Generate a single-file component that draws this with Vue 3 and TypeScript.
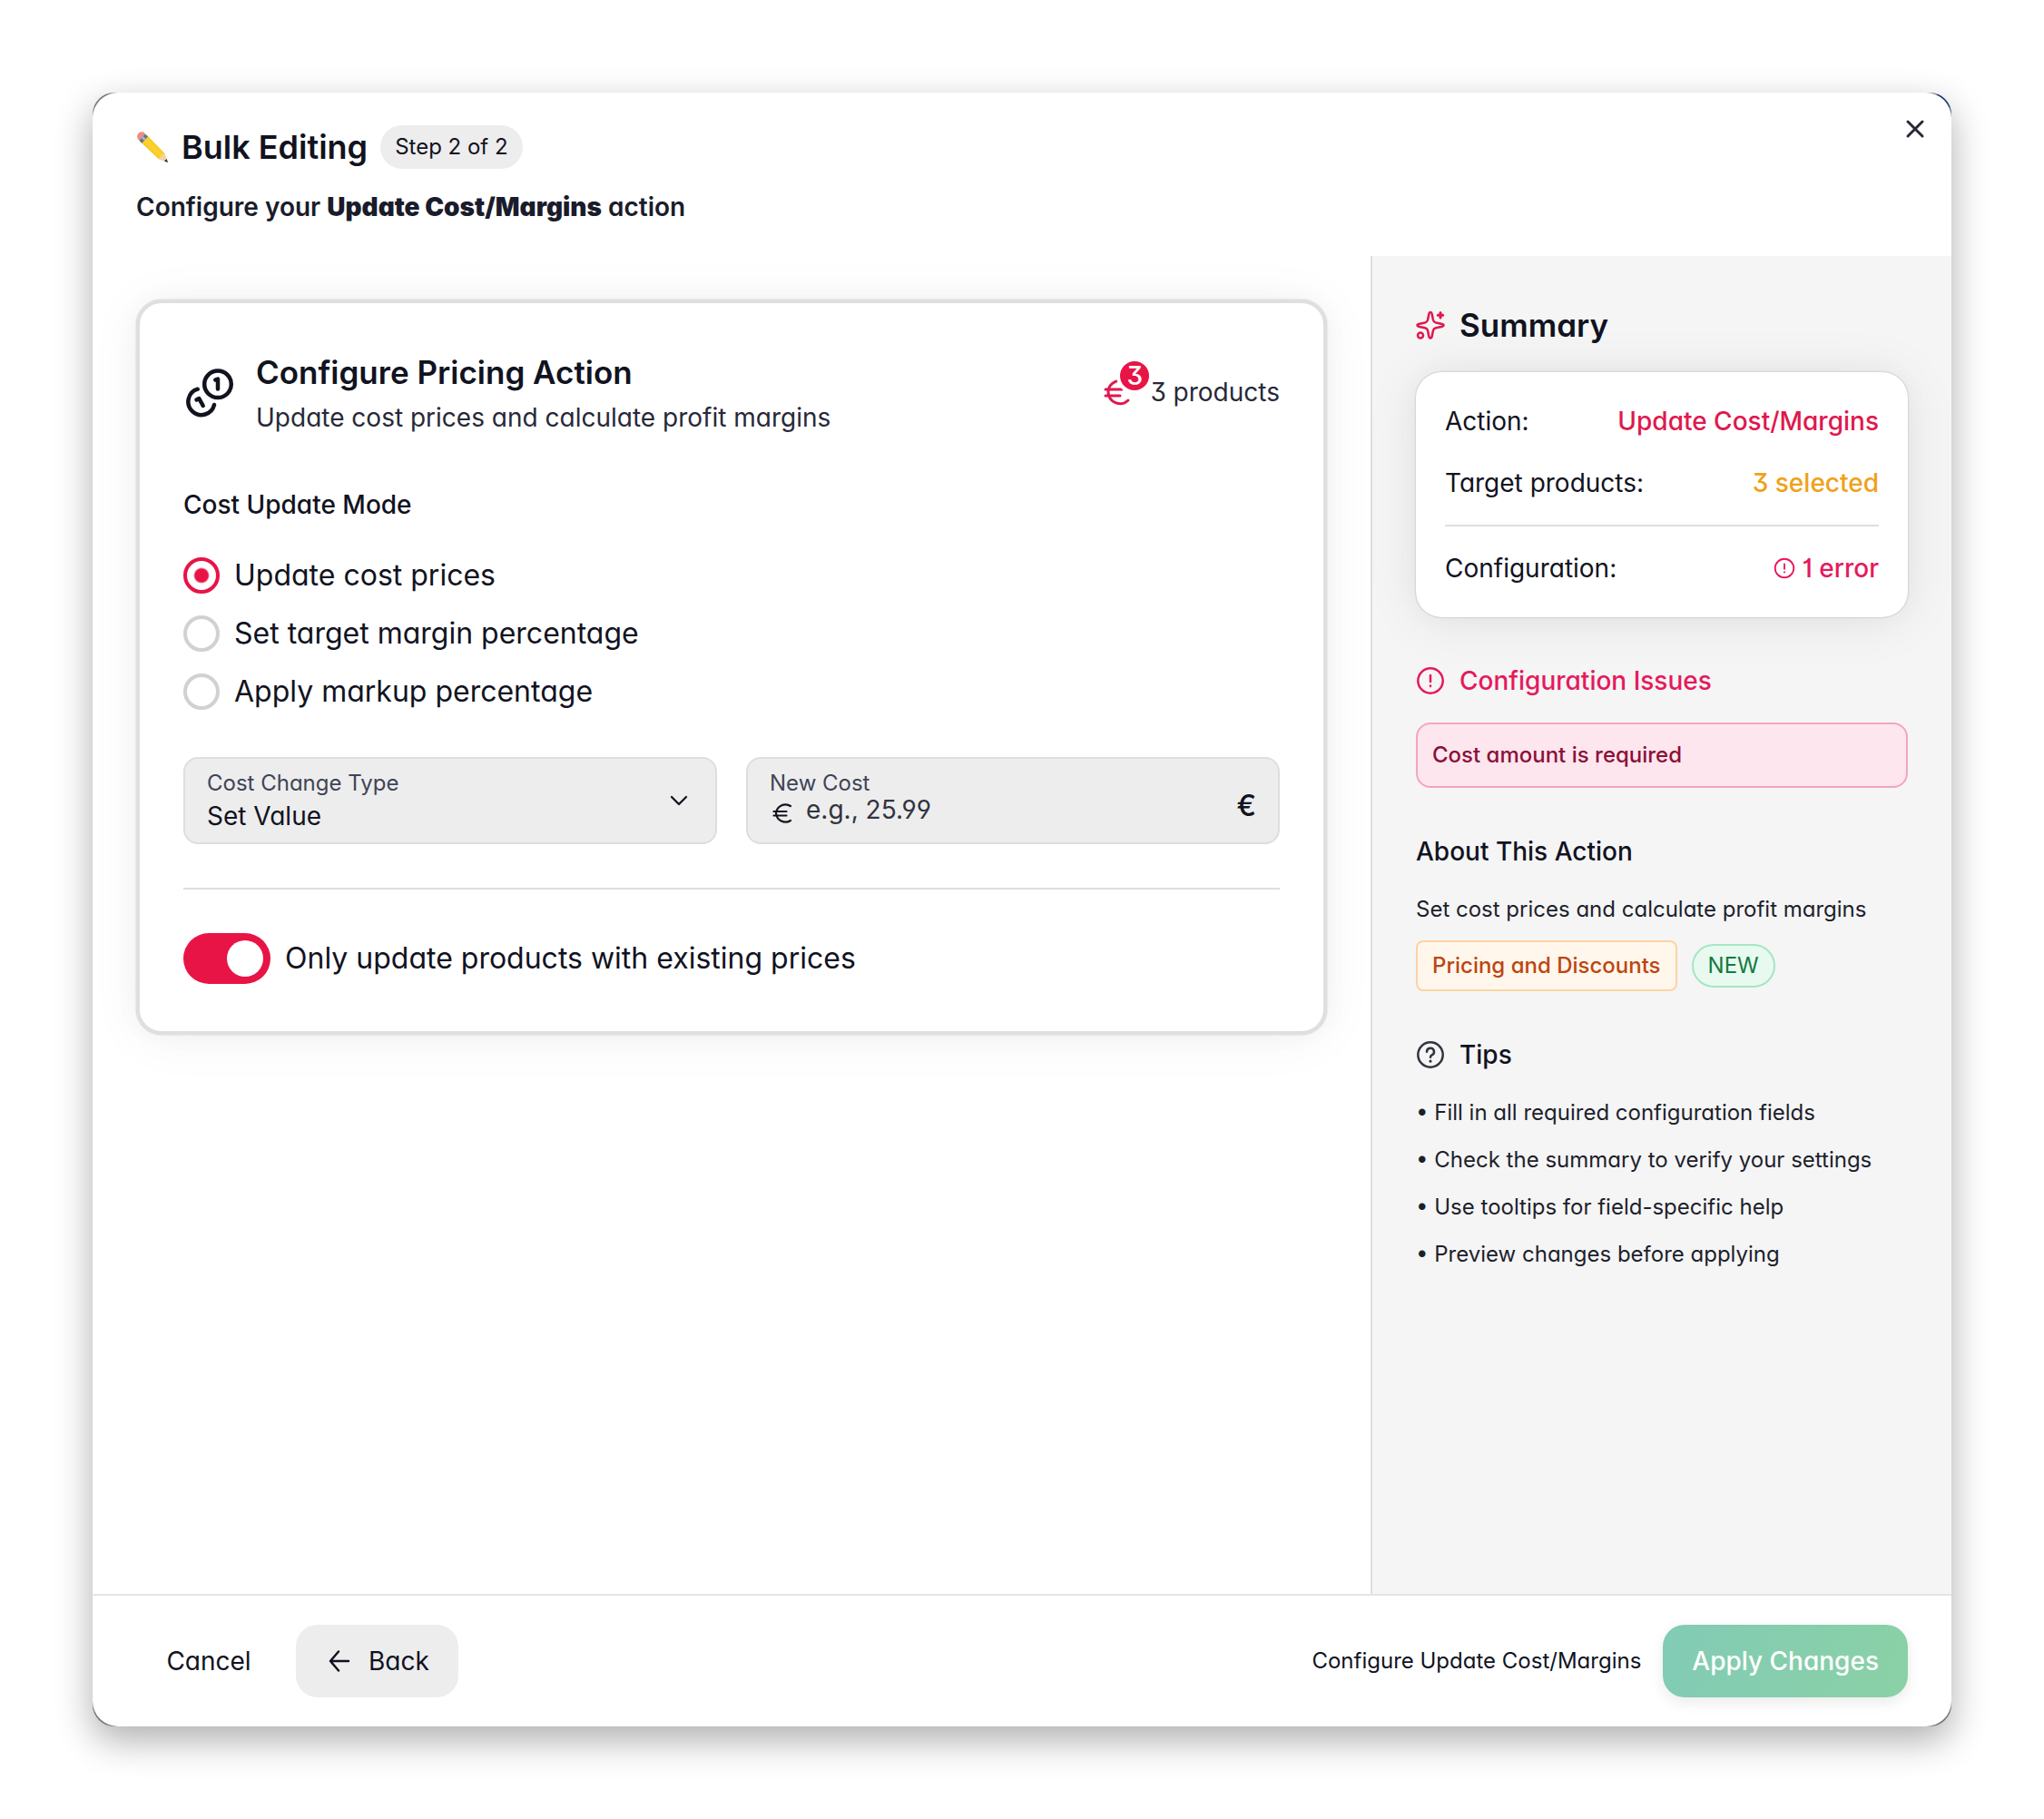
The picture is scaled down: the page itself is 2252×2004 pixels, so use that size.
<script setup lang="ts">
import { ref } from 'vue'

interface Option {
  value: string
  label: string
}

const modes: Option[] = [
  { value: 'cost', label: 'Update cost prices' },
  { value: 'margin', label: 'Set target margin percentage' },
  { value: 'markup', label: 'Apply markup percentage' },
]

const tips: string[] = [
  'Fill in all required configuration fields',
  'Check the summary to verify your settings',
  'Use tooltips for field-specific help',
  'Preview changes before applying',
]

const mode = ref('cost')
const changeType = ref('set')
const cost = ref('')
const onlyExisting = ref(true)
</script>

<template>
  <div class="page">
    <div class="window">
      <section class="modal" role="dialog" aria-labelledby="dialog-title">
        <header class="top">
          <div class="title-row">
            <svg class="pencil" viewBox="0 0 36 36" aria-hidden="true">
              <defs>
                <linearGradient id="wood" x1="0" y1="1" x2="1" y2="0">
                  <stop offset="0" stop-color="#e9a400" />
                  <stop offset="0.5" stop-color="#fdd32f" />
                  <stop offset="1" stop-color="#e8a800" />
                </linearGradient>
              </defs>
              <path d="M1.600 8.500 C0.500 6 1.500 3.500 3.200 2.200 C5 0.800 7.500 0.800 9 2.200 L10 3.400 L3.300 10.800 Z" fill="#ee8a86" />
              <path d="M5.300 12.800 L12.300 5.300 L31.500 25 L25 31.500 Z" fill="url(#wood)" />
              <path d="M3.300 10.800 L10 3.400 L13 6.400 L6.300 13.800 Z" fill="#66747f" />
              <path d="M5.800 8 L7.600 6 L10.800 9 L9 11 Z" fill="#a9b6bf" />
              <path d="M31.500 25 L35 35 L25 31.500 C25 29.500 26 29 27.500 29 C27.500 27 28.500 26.500 29.600 26.800 C29.600 25.500 30.200 25 31.500 25 Z" fill="#f3d3a2" />
              <path d="M33.600 31 L35 35 L31 33.600 Z" fill="#2c2c2c" />
            </svg>
            <h1 id="dialog-title">Bulk Editing</h1>
            <span class="step">Step 2 of 2</span>
          </div>
          <p class="lead">Configure your <strong>Update Cost/Margins</strong> action</p>
          <button class="close" type="button" aria-label="Close">
            <svg viewBox="0 0 32 32" fill="none" stroke="currentColor" stroke-width="3" stroke-linecap="round">
              <path d="M8 8 L24 24 M24 8 L8 24" />
            </svg>
          </button>
        </header>

        <div class="body">
          <main class="main">
            <form class="card" @submit.prevent>
              <div class="card-head">
                <svg class="coins" viewBox="0 0 56 56" fill="none" stroke="currentColor" stroke-width="4.500" stroke-linecap="round" stroke-linejoin="round" aria-hidden="true">
                  <circle cx="38" cy="19.300" r="14.800" />
                  <path d="M35.300 14.500 L38 13.500 V24.500" />
                  <path d="M15.700 24.700 A14.500 14.500 0 1 0 34 42" />
                  <path d="M14.500 36.500 L17.300 35 L21.700 43" />
                </svg>
                <div class="card-title">
                  <h2>Configure Pricing Action</h2>
                  <p>Update cost prices and calculate profit margins</p>
                </div>
                <div class="count">
                  <span class="euro-badge">
                    <svg viewBox="0 0 40 40" fill="none" stroke="currentColor" stroke-width="3" stroke-linecap="round" aria-hidden="true">
                      <path d="M32 29 A13 13 0 0 1 10 20 A13 13 0 0 1 32 11" />
                      <path d="M7 17 H25 M7 24 H23" />
                    </svg>
                    <span class="dot">3</span>
                  </span>
                  <span>3 products</span>
                </div>
              </div>

              <fieldset class="modes">
                <legend>Cost Update Mode</legend>
                <label v-for="m in modes" :key="m.value" class="mode">
                  <input v-model="mode" type="radio" name="mode" :value="m.value" />
                  <span>{{ m.label }}</span>
                </label>
              </fieldset>

              <div class="fields">
                <div class="field">
                  <div class="field-text">
                    <label for="change-type">Cost Change Type</label>
                    <select id="change-type" v-model="changeType">
                      <option value="set">Set Value</option>
                    </select>
                  </div>
                  <svg class="chevron" viewBox="0 0 32 32" fill="none" stroke="currentColor" stroke-width="2.300" stroke-linecap="round" stroke-linejoin="round" aria-hidden="true">
                    <path d="M8 12 L16 20 L24 12" />
                  </svg>
                </div>
                <div class="field">
                  <div class="field-text">
                    <label for="new-cost">New Cost</label>
                    <div class="amount">
                      <svg viewBox="0 2 28 32" fill="none" stroke="currentColor" stroke-width="2.200" stroke-linecap="round" aria-hidden="true">
                        <path d="M23 26 A10.500 10.500 0 0 1 7 18 A10.500 10.500 0 0 1 23 10" />
                        <path d="M4.500 16 H18.500 M4.500 20.500 H18.500" />
                      </svg>
                      <input id="new-cost" v-model="cost" type="text" placeholder="e.g., 25.99" />
                    </div>
                  </div>
                  <span class="unit">€</span>
                </div>
              </div>

              <hr />

              <label class="toggle">
                <input v-model="onlyExisting" type="checkbox" role="switch" />
                <span>Only update products with existing prices</span>
              </label>
            </form>
          </main>

          <aside class="side">
            <section>
              <h2 class="summary-title">
                <svg class="red" viewBox="0 0 32 32" fill="none" stroke="currentColor" stroke-width="2.500" stroke-linecap="round" stroke-linejoin="round" aria-hidden="true">
                  <path d="M16 2 C17.200 2 17.500 3 17.800 4.500 L19 10.500 C19.500 12.500 20 13 22 13.500 L28 14.700 C29.800 15 30.500 15.500 30.500 16.300 C30.500 17.200 29.800 17.600 28 18 L22 19.200 C20 19.700 19.500 20.200 19 22 L17.800 28 C17.500 29.700 17.200 30.500 16 30.500 C14.900 30.500 14.500 29.700 14.200 28 L13 22 C12.500 20.200 12 19.700 10 19.200 L4 18 C2.400 17.600 1.500 17.200 1.500 16.300 C1.500 15.500 2.400 15 4 14.700 L10 13.500 C12 13 12.500 12.500 13 10.500 L14.200 4.500 C14.500 3 14.900 2 16 2 Z" />
                  <path d="M27 2.500 V8 M24.300 5.200 H29.700" stroke-width="3" />
                  <circle cx="5" cy="27.500" r="3" />
                </svg>
                Summary
              </h2>
              <dl class="summary">
                <div class="row">
                  <dt>Action:</dt>
                  <dd class="red">Update Cost/Margins</dd>
                </div>
                <div class="row">
                  <dt>Target products:</dt>
                  <dd class="amber">3 selected</dd>
                </div>
                <div class="row ruled">
                  <dt>Configuration:</dt>
                  <dd class="pink">
                    <svg viewBox="0 0 32 32" fill="none" stroke="currentColor" stroke-width="2.500" stroke-linecap="round" aria-hidden="true">
                      <circle cx="16" cy="16" r="13.700" />
                      <path d="M16 10 V17 M16 21.500 V22" />
                    </svg>
                    1 error
                  </dd>
                </div>
              </dl>
            </section>

            <section>
              <h3 class="pink">
                <svg viewBox="0 0 32 32" fill="none" stroke="currentColor" stroke-width="2.500" stroke-linecap="round" aria-hidden="true">
                  <circle cx="16" cy="16" r="13.700" />
                  <path d="M16 10 V17 M16 21.500 V22" />
                </svg>
                Configuration Issues
              </h3>
              <p class="alert">Cost amount is required</p>
            </section>

            <section>
              <h3>About This Action</h3>
              <p class="about">Set cost prices and calculate profit margins</p>
              <div class="tags">
                <span class="tag">Pricing and Discounts</span>
                <span class="tag new">NEW</span>
              </div>
            </section>

            <section>
              <h3>
                <svg class="soft" viewBox="0 0 32 32" fill="none" stroke="currentColor" stroke-width="2.500" stroke-linecap="round" stroke-linejoin="round" aria-hidden="true">
                  <circle cx="16" cy="16" r="13.700" />
                  <path d="M12 12.800 A4 4 0 1 1 17.500 16.400 C16.500 17 16 17.600 16 18.800" />
                  <path d="M16 23 V23.200" stroke-width="3" />
                </svg>
                Tips
              </h3>
              <ul>
                <li v-for="tip in tips" :key="tip">• {{ tip }}</li>
              </ul>
            </section>
          </aside>
        </div>

        <footer class="bottom">
          <button class="btn" type="button">Cancel</button>
          <button class="btn back" type="button">
            <svg viewBox="0 0 32 32" fill="none" stroke="currentColor" stroke-width="2.500" stroke-linecap="round" stroke-linejoin="round" aria-hidden="true">
              <path d="M26 16 H6 M15 5.500 L6 16 L15 26.500" />
            </svg>
            Back
          </button>
          <span class="hint">Configure Update Cost/Margins</span>
          <button class="btn apply" type="button">Apply Changes</button>
        </footer>
      </section>
    </div>
  </div>
</template>

<style>
body {
  background: #fff;
}
</style>

<style scoped>
.page,
.page * {
  box-sizing: border-box;
}

.page {
  display: flex;
  min-height: 100vh;
  padding: 102px;
  font-family: Inter, 'Noto Sans', sans-serif;
  font-feature-settings: 'cv01', 'cv03', 'cv04', 'cv09', 'cv11';
  font-size: 28px;
  line-height: 44px;
  color: #11131f;
}

h1,
h2,
h3,
p,
ul,
dl,
dd,
hr,
fieldset {
  margin: 0;
  padding: 0;
  border: 0;
}

button,
input,
select {
  font: inherit;
  font-feature-settings: inherit;
  color: inherit;
  margin: 0;
}

svg {
  display: block;
  flex: none;
}

.window {
  display: flex;
  flex: 1;
  border-radius: 24px;
  background: linear-gradient(#1f3b6d, #1f3b6d) right 0 top 2px / 16px 32px no-repeat #777;
  box-shadow: 0 15px 40px rgb(0 0 0 / 32%);
}

.modal {
  display: flex;
  flex: 1;
  flex-direction: column;
  overflow: hidden;
  border-radius: 28px;
  background: #fff;
}

.top {
  position: relative;
  padding: 36px 48px 32px;
}

.title-row {
  display: flex;
  align-items: center;
  gap: 14px;
  margin-bottom: 20px;
}

.pencil {
  width: 36px;
  height: 36px;
}

h1 {
  font-size: 36px;
  font-weight: 600;
  line-height: 48px;
}

h2 {
  font-size: 35px;
  font-weight: 600;
  line-height: 56px;
}

.step {
  padding: 0 16px;
  border-radius: 24px;
  background: #ededed;
  font-size: 24px;
  line-height: 48px;
}

.lead {
  font-weight: 600;
  color: #1a1c2b;
}

.lead strong {
  font-weight: 900;
}

.close {
  position: absolute;
  top: 16px;
  right: 16px;
  display: grid;
  place-items: center;
  width: 48px;
  height: 48px;
  padding: 0;
  border: 0;
  background: none;
  color: #272938;
}

.close svg {
  width: 32px;
  height: 32px;
}

.body {
  display: flex;
  flex: 1;
}

.main {
  flex: 1;
  padding: 48px;
}

.card {
  padding: 48px 48px 52px;
  border: 4px solid #dfdfdf;
  border-radius: 28px;
  background: #fff;
  box-shadow: 0 0 30px rgb(0 0 0 / 3%), 0 4px 60px rgb(0 0 0 / 5%), 0 0 2px rgb(0 0 0 / 20%);
}

.card-head {
  display: flex;
  align-items: center;
}

.coins {
  width: 56px;
  height: 56px;
  margin-right: 24px;
}

.card-title {
  flex: 1;
}

.card-title p,
.count {
  color: #272938;
}

.count {
  display: flex;
  align-items: center;
  gap: 16px;
}

.euro-badge {
  position: relative;
  color: #e0184d;
}

.euro-badge svg {
  width: 40px;
  height: 40px;
}

.dot {
  position: absolute;
  top: -18px;
  right: -19px;
  width: 40px;
  height: 40px;
  border: 4px solid #fff;
  border-radius: 50%;
  background: #e81446;
  color: #fff;
  font-size: 28px;
  font-weight: 500;
  line-height: 32px;
  text-align: center;
}

.modes {
  display: flex;
  flex-direction: column;
  gap: 16px;
  margin-top: 52px;
}

.modes legend {
  margin-bottom: 32px;
  padding: 0;
  font-weight: 500;
}

.mode,
.toggle {
  display: flex;
  align-items: center;
  gap: 16px;
  font-size: 32px;
  line-height: 48px;
}

.mode input {
  width: 40px;
  height: 40px;
  border: 4px solid #d1d1d1;
  border-radius: 50%;
  background: #fff;
  appearance: none;
}

.mode input:checked {
  border-color: #e81446;
  background: radial-gradient(circle, #e81446 0 7px, #fff 9px);
}

.fields {
  display: grid;
  grid-template-columns: 1fr 1fr;
  gap: 32px;
  margin-top: 48px;
}

.field {
  display: flex;
  align-items: center;
  height: 96px;
  padding: 0 24px;
  border: 2px solid #dedede;
  border-radius: 16px;
  background: #ededed;
}

.field-text {
  display: flex;
  flex: 1;
  flex-direction: column;
}

.field-text label {
  font-size: 24px;
  line-height: 34px;
  color: #3f4456;
}

.field-text select {
  height: 38px;
  padding: 0;
  border: 0;
  background: none;
  line-height: 36px;
  appearance: none;
}

.chevron {
  width: 32px;
  height: 32px;
}

.amount {
  display: flex;
  align-items: flex-start;
  gap: 12px;
  height: 38px;
}

.amount svg {
  width: 28px;
  height: 32px;
}

.amount input {
  flex: 1;
  height: 36px;
  margin-top: -6px;
  padding: 0;
  border: 0;
  background: none;
  line-height: 36px;
  outline: 0;
}

.amount input::placeholder {
  color: #32343f;
  opacity: 1;
}

.unit {
  padding-top: 12px;
  font-size: 32px;
  font-weight: 500;
}

hr {
  height: 2px;
  margin: 48px 0;
  background: #dedede;
}

.toggle input {
  width: 96px;
  height: 56px;
  padding: 8px;
  border-radius: 28px;
  background: #d4d4d8;
  appearance: none;
}

.toggle input::before {
  display: block;
  width: 40px;
  height: 40px;
  border-radius: 50%;
  background: #fff;
  content: '';
}

.toggle input:checked {
  background: #e81446;
}

.toggle input:checked::before {
  margin-left: auto;
}

.side {
  position: relative;
  display: flex;
  flex: none;
  flex-direction: column;
  gap: 48px;
  width: 640px;
  padding: 48px;
  border-left: 2px solid #dedede;
  background: #f5f5f5;
}

.summary-title,
h3 {
  display: flex;
  align-items: center;
  gap: 16px;
  margin-bottom: 24px;
}

.summary-title svg,
h3 svg {
  width: 32px;
  height: 32px;
}

h3 {
  font-size: 28px;
  font-weight: 500;
}

.red {
  color: #e0184d;
}

.amber {
  color: #efa11a;
}

.pink {
  color: #e6195e;
}

.soft {
  color: #32343f;
}

.summary {
  display: flex;
  flex-direction: column;
  gap: 24px;
  padding: 32px;
  border-radius: 28px;
  background: #fff;
  box-shadow: 0 0 30px rgb(0 0 0 / 3%), 0 4px 60px rgb(0 0 0 / 8%), 0 0 2px rgb(0 0 0 / 30%);
}

.row {
  display: flex;
  justify-content: space-between;
}

.row dd {
  display: flex;
  align-items: center;
  gap: 7px;
  font-weight: 500;
}

.row svg {
  width: 24px;
  height: 24px;
}

.ruled {
  padding-top: 24px;
  border-top: 2px solid #dedede;
}

.alert {
  padding: 16px;
  border: 2px solid #f3a4c0;
  border-radius: 16px;
  background: #fde6ee;
  color: #8c1038;
  font-size: 24px;
  font-weight: 500;
  line-height: 36px;
}

.about,
li {
  color: #1d1f2c;
  font-size: 24px;
  line-height: 36px;
}

.tags {
  display: flex;
  align-items: center;
  gap: 16px;
  margin-top: 16px;
}

.tag {
  padding: 0 16px;
  border: 2px solid #fcd3a3;
  border-radius: 8px;
  background: #fff7ec;
  color: #bd4510;
  font-size: 24px;
  font-weight: 500;
  line-height: 52px;
}

.tag.new {
  border-color: #a5e5c3;
  border-radius: 24px;
  background: #e8faf0;
  color: #147a40;
  font-weight: 400;
  line-height: 44px;
}

ul {
  display: flex;
  flex-direction: column;
  gap: 16px;
  list-style: none;
}

.bottom {
  display: flex;
  align-items: center;
  gap: 16px;
  padding: 32px 48px;
  border-top: 2px solid #e4e4e4;
}

.btn {
  display: flex;
  align-items: center;
  justify-content: center;
  gap: 16px;
  min-width: 160px;
  height: 80px;
  padding: 0 32px;
  border: 0;
  border-radius: 24px;
  background: none;
}

.back {
  background: #ededed;
}

.btn svg {
  width: 32px;
  height: 32px;
}

.hint {
  margin-right: 8px;
  margin-left: auto;
  font-size: 24px;
}

.apply {
  background: linear-gradient(100deg, #82cbb5, #8ad1a6);
  box-shadow: 0 6px 16px rgb(0 0 0 / 8%);
  color: #fff;
  font-weight: 500;
}
</style>
